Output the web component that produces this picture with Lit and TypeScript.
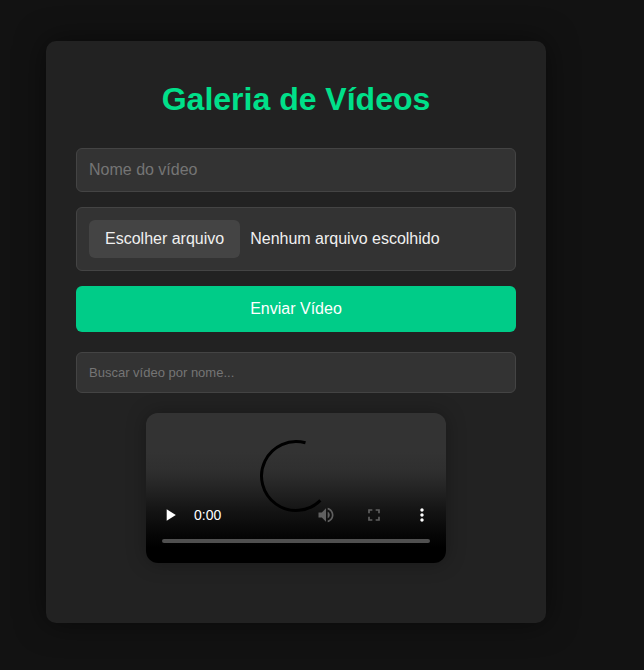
import { LitElement, html, css } from "lit";
import { customElement, property, state } from "lit/decorators.js";

@customElement("video-player")
class VideoPlayer extends LitElement {
  @property({ type: Number }) position = 0;

  static styles = css`
    :host {
      display: block;
      width: 100%;
      max-width: 300px;
    }
    .player {
      position: relative;
      display: flex;
      flex-direction: column;
      justify-content: flex-end;
      box-sizing: border-box;
      aspect-ratio: 2 / 1;
      padding-bottom: 20px;
      border-radius: 12px;
      overflow: hidden;
      background: linear-gradient(#333 0%, #333 26%, #2f2f2f 38%, #292929 45%, #202020 54%, #131313 66%, #060606 81%, #000 90%);
      color: #fff;
    }
    .spinner {
      position: absolute;
      top: 26px;
      left: 0;
      right: 0;
      margin: 0 auto;
      width: 74px;
      height: 74px;
      fill: none;
      stroke: #000;
      stroke-width: 3;
    }
    .controls {
      position: relative;
      display: flex;
      align-items: center;
    }
    .control {
      display: grid;
      place-items: center;
      width: 48px;
      height: 48px;
      padding: 0;
      border: 0;
      background: none;
      color: #fff;
      cursor: pointer;
    }
    .control:disabled {
      color: #606060;
      cursor: default;
    }
    .icon {
      width: 20px;
      height: 20px;
      fill: currentColor;
    }
    .time {
      flex: 1;
      font-size: 14px;
      line-height: 20px;
    }
    .timeline {
      position: relative;
      appearance: none;
      height: 4px;
      margin: 0 16px;
      border-radius: 4px;
      background: #505050;
    }
    .timeline::-webkit-slider-thumb {
      appearance: none;
      width: 0;
      height: 0;
    }
  `;

  render() {
    return html`
      <div class="player">
        <svg class="spinner" viewBox="0 0 74 74" aria-hidden="true">
          <path d="M46.5 3.8A34.5 34.5 0 1 0 61.4 61.4" />
        </svg>
        <div class="controls">
          <button class="control" type="button" aria-label="Reproduzir">
            <svg class="icon" viewBox="0 0 24 24"><path d="M8 5v14l11-7z" /></svg>
          </button>
          <span class="time">0:00</span>
          <button class="control" type="button" aria-label="Volume" disabled>
            <svg class="icon" viewBox="0 0 24 24">
              <path d="M3 9v6h4l5 5V4L7 9H3zm13.5 3c0-1.77-1.02-3.29-2.5-4.03v8.05c1.48-.73 2.5-2.25 2.5-4.02zM14 3.23v2.06c2.89.86 5 3.54 5 6.71s-2.11 5.85-5 6.71v2.06c4.01-.91 7-4.49 7-8.77s-2.99-7.86-7-8.77z" />
            </svg>
          </button>
          <button class="control" type="button" aria-label="Tela cheia" disabled>
            <svg class="icon" viewBox="0 0 24 24">
              <path d="M7 14H5v5h5v-2H7v-3zm-2-4h2V7h3V5H5v5zm12 7h-3v2h5v-5h-2v3zM14 5v2h3v3h2V5h-5z" />
            </svg>
          </button>
          <button class="control" type="button" aria-label="Mais opções">
            <svg class="icon" viewBox="0 0 24 24">
              <path d="M12 8c1.1 0 2-.9 2-2s-.9-2-2-2-2 .9-2 2 .9 2 2 2zm0 2c-1.1 0-2 .9-2 2s.9 2 2 2 2-.9 2-2-.9-2-2-2zm0 6c-1.1 0-2 .9-2 2s.9 2 2 2 2-.9 2-2-.9-2-2-2z" />
            </svg>
          </button>
        </div>
        <input class="timeline" type="range" min="0" max="100" .value=${String(this.position)} aria-label="Posição do vídeo" />
      </div>
    `;
  }
}

@customElement("app-root")
class AppRoot extends LitElement {
  @state() private fileName = "";

  static styles = css`
    :host {
      display: block;
      box-sizing: border-box;
      min-height: 100vh;
      padding: 41px 46px;
      background: #121212;
      color: #f0f0f0;
      font-family: Arial, "Liberation Sans", sans-serif;
      font-size: 16px;
    }
    .card {
      box-sizing: border-box;
      max-width: 500px;
      padding: 40px 30px 60px;
      border-radius: 10px;
      background: #222;
      box-shadow: 0 0 30px rgba(0, 0, 0, 0.5);
    }
    .title {
      margin: 0 0 30px;
      color: #00e08a;
      font-size: 32px;
      line-height: 37px;
      text-align: center;
    }
    .form {
      display: flex;
      flex-direction: column;
      gap: 15px;
      margin-bottom: 20px;
    }
    .field {
      box-sizing: border-box;
      width: 100%;
      padding: 12px;
      border: 1px solid #444;
      border-radius: 6px;
      background: #333;
      color: inherit;
      font-family: inherit;
      font-size: 16px;
      line-height: 18px;
    }
    .field::placeholder {
      color: #757575;
    }
    .name {
      height: 44px;
    }
    .search {
      display: block;
      height: 41px;
      margin-bottom: 20px;
      font-size: 13px;
    }
    .file {
      position: relative;
      display: flex;
      align-items: center;
      gap: 10px;
      padding: 12px;
      cursor: pointer;
    }
    .file-input {
      position: absolute;
      inset: 0;
      width: 100%;
      opacity: 0;
      cursor: pointer;
    }
    .file-button {
      padding: 10px 16px;
      border-radius: 6px;
      background: #444;
    }
    .submit {
      height: 46px;
      border: 0;
      border-radius: 6px;
      background: #00cc88;
      color: #fff;
      font-family: inherit;
      font-size: 16px;
      cursor: pointer;
    }
    .video {
      margin: 0 auto;
      border-radius: 12px;
      box-shadow: 0 0 20px rgba(0, 0, 0, 0.3);
    }
  `;

  private pickFile(e: Event) {
    this.fileName = (e.target as HTMLInputElement).files?.[0]?.name ?? "";
  }

  render() {
    return html`
      <main class="card">
        <h1 class="title">Galeria de Vídeos</h1>
        <form class="form" @submit=${(e: Event) => e.preventDefault()}>
          <input class="field name" type="text" placeholder="Nome do vídeo" aria-label="Nome do vídeo" />
          <label class="field file">
            <input class="file-input" type="file" accept="video/*" @change=${this.pickFile} />
            <span class="file-button">Escolher arquivo</span>
            <span>${this.fileName || "Nenhum arquivo escolhido"}</span>
          </label>
          <button class="submit" type="submit">Enviar Vídeo</button>
        </form>
        <input class="field search" type="search" placeholder="Buscar vídeo por nome..." aria-label="Buscar vídeo por nome" />
        <video-player class="video"></video-player>
      </main>
    `;
  }
}
